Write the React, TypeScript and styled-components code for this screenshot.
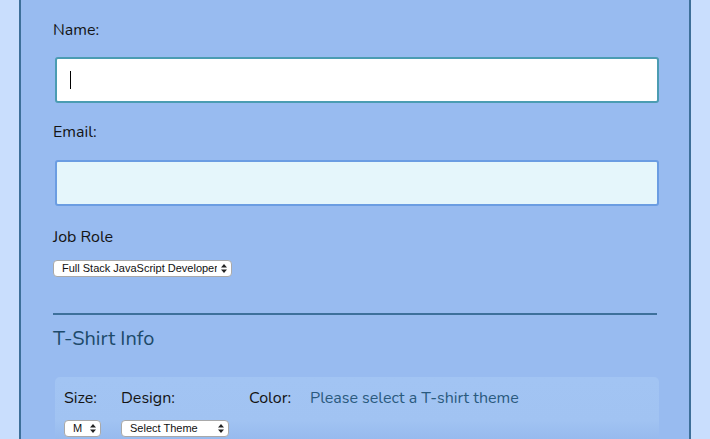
import React from "react";
import styled, { createGlobalStyle } from "styled-components";

const Global = createGlobalStyle`
  html, body { margin: 0; padding: 0; background: #c9defd; }
  body { font-family: "Nunito", "Noto Sans", "Open Sans", sans-serif; color: #111; overflow: hidden; }
`;

const Page = styled.div`
  height: 439px;
  background: #c9defd;
  padding: 0 19px;
  box-sizing: border-box;
`;

const Panel = styled.form`
  height: 100%;
  background: #98bbf0;
  border-left: 2px solid #3d6f99;
  border-right: 2px solid #3d6f99;
  padding: 19px 32px 0;
  box-sizing: border-box;
  display: flex;
  flex-direction: column;
`;

const Label = styled.label<{ $gap: number }>`
  display: block;
  font-size: 16px;
  line-height: 22px;
  color: #141414;
  margin-bottom: ${(p) => p.$gap}px;
`;

const FieldWrap = styled.div<{ $gap: number }>`
  position: relative;
  margin: 0 -2px ${(p) => p.$gap}px 2px;
`;

const TextInput = styled.input<{ $focused?: boolean }>`
  display: block;
  width: 100%;
  box-sizing: border-box;
  height: 46px;
  border-radius: 3px;
  border: 2px solid ${(p) => (p.$focused ? "#4b9cb2" : "#6b9de2")};
  background: ${(p) => (p.$focused ? "#ffffff" : "#e5f6fb")};
  outline: none;
  font-size: 16px;
  padding: 0 14px;
  margin: 0;
`;

const Caret = styled.span`
  position: absolute;
  left: 15px;
  top: 14px;
  width: 1px;
  height: 18px;
  background: #000;
`;

const SelectWrap = styled.div<{ $w: number }>`
  position: relative;
  width: ${(p) => p.$w}px;
  height: 17px;
`;

const Select = styled.select`
  appearance: none;
  -webkit-appearance: none;
  display: block;
  width: 100%;
  height: 100%;
  box-sizing: border-box;
  border: 1px solid #a9a9a9;
  border-radius: 4px;
  background: #ffffff;
  font-family: "Liberation Sans", Arial, sans-serif;
  font-size: 11px;
  color: #111;
  padding: 0 14px 0 8px;
  margin: 0;
  line-height: 15px;
  outline: none;
`;

const Arrows = styled.svg`
  position: absolute;
  right: 5px;
  top: 4px;
  pointer-events: none;
`;

const Rule = styled.hr`
  border: 0;
  height: 2px;
  background: #3d709b;
  margin: 36px 0 0;
`;

const Heading = styled.h2`
  font-size: 20px;
  font-weight: 400;
  color: #1d4a6a;
  margin: 11px 0 0;
  line-height: 26px;
`;

const Box = styled.div`
  margin: 25px -2px 0 2px;
  flex: 1;
  border-radius: 5px 5px 0 0;
  background: linear-gradient(#a2c4f3 0%, #a1c3f2 70%, #97baee 100%);
  padding: 10px 9px 0;
  display: grid;
  grid-template-columns: 57px 128px 61px auto;
  grid-template-rows: 22px auto;
  row-gap: 11px;
  align-content: start;
`;

const BoxLabel = styled.span<{ $muted?: boolean }>`
  font-size: 16px;
  line-height: 22px;
  color: ${(p) => (p.$muted ? "#2a5a7e" : "#141414")};
  white-space: nowrap;
`;

const ArrowIcon = () => (
  <Arrows width="6" height="9" viewBox="0 0 6 9">
    <path d="M3 0 L6 3.6 H0 Z M3 9 L6 5.4 H0 Z" fill="#222" />
  </Arrows>
);

function Dropdown({ w, value }: { w: number; value: string }) {
  return (
    <SelectWrap $w={w}>
      <Select defaultValue={value}>
        <option>{value}</option>
      </Select>
      <ArrowIcon />
    </SelectWrap>
  );
}

export default function App() {
  return (
    <Page>
      <Global />
      <Panel>
        <Label $gap={16}>Name:</Label>
        <FieldWrap $gap={18}>
          <TextInput $focused type="text" />
          <Caret />
        </FieldWrap>
        <Label $gap={17}>Email:</Label>
        <FieldWrap $gap={20}>
          <TextInput type="email" />
        </FieldWrap>
        <Label $gap={12}>Job Role</Label>
        <Dropdown w={179} value="Full Stack JavaScript Developer" />
        <Rule />
        <Heading>T-Shirt Info</Heading>
        <Box>
          <BoxLabel>Size:</BoxLabel>
          <BoxLabel>Design:</BoxLabel>
          <BoxLabel>Color:</BoxLabel>
          <BoxLabel $muted>Please select a T-shirt theme</BoxLabel>
          <Dropdown w={37} value="M" />
          <Dropdown w={108} value="Select Theme" />
        </Box>
      </Panel>
    </Page>
  );
}
